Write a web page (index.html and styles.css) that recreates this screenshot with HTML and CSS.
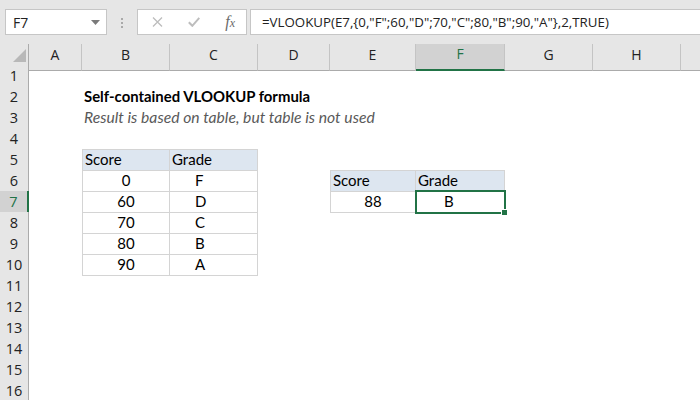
FILE: index.html
```html
<!DOCTYPE html>
<html lang="en">
<head>
    <meta charset="UTF-8">
    <title>Self-contained VLOOKUP formula</title>
    <link rel="stylesheet" href="styles.css">
</head>
<body>
    <div class="toolbar">
        <div class="namebox">
            <span>F7</span>
            <svg class="caret" width="9" height="5" viewBox="0 0 9 5"><polygon points="0,0 9,0 4.5,5" fill="#7a7a7a"/></svg>
        </div>
        <div class="grip"><i></i><i></i><i></i></div>
        <div class="fx-buttons">
            <svg width="11" height="10" viewBox="0 0 11 10"><path d="M1 0.5 L10 9.5 M10 0.5 L1 9.5" stroke="#bdbdbd" stroke-width="1.3" fill="none"/></svg>
            <svg width="12" height="10" viewBox="0 0 12 10"><path d="M0.8 5.2 L4.3 8.8 L11.3 0.8" stroke="#bdbdbd" stroke-width="2" fill="none"/></svg>
            <span class="fx">f<small>x</small></span>
        </div>
        <div class="formula">=VLOOKUP(E7,{0,"F";60,"D";70,"C";80,"B";90,"A"},2,TRUE)</div>
    </div>

    <div class="sheet">
        <div class="row head">
            <div class="corner">
                <svg width="29" height="21" viewBox="0 0 29 21"><polygon points="26,5 26,18 13,18" fill="#b8b8b8"/></svg>
            </div>
            <div class="colhead">A</div>
            <div class="colhead">B</div>
            <div class="colhead">C</div>
            <div class="colhead">D</div>
            <div class="colhead">E</div>
            <div class="colhead active">F</div>
            <div class="colhead">G</div>
            <div class="colhead">H</div>
            <div class="colhead last"></div>
        </div>

        <div class="row"><div class="rowhead">1</div></div>
        <div class="row">
            <div class="rowhead">2</div>
            <div class="cell col-b wide title">Self-contained VLOOKUP formula</div>
        </div>
        <div class="row">
            <div class="rowhead">3</div>
            <div class="cell col-b wide subtitle">Result is based on table, but table is not used</div>
        </div>
        <div class="row"><div class="rowhead">4</div></div>
        <div class="row">
            <div class="rowhead">5</div>
            <div class="cell col-b tbl hdr top left">Score</div>
            <div class="cell col-c tbl hdr top">Grade</div>
        </div>
        <div class="row">
            <div class="rowhead">6</div>
            <div class="cell col-b tbl left num">0</div>
            <div class="cell col-c tbl grade">F</div>
            <div class="cell col-e tbl hdr top left">Score</div>
            <div class="cell col-f tbl hdr top">Grade</div>
        </div>
        <div class="row">
            <div class="rowhead active">7</div>
            <div class="cell col-b tbl left num">60</div>
            <div class="cell col-c tbl grade">D</div>
            <div class="cell col-e tbl left num">88</div>
            <div class="cell col-f tbl grade result selected">B</div>
        </div>
        <div class="row">
            <div class="rowhead">8</div>
            <div class="cell col-b tbl left num">70</div>
            <div class="cell col-c tbl grade">C</div>
        </div>
        <div class="row">
            <div class="rowhead">9</div>
            <div class="cell col-b tbl left num">80</div>
            <div class="cell col-c tbl grade">B</div>
        </div>
        <div class="row">
            <div class="rowhead">10</div>
            <div class="cell col-b tbl left num">90</div>
            <div class="cell col-c tbl grade">A</div>
        </div>
        <div class="row"><div class="rowhead">11</div></div>
        <div class="row"><div class="rowhead">12</div></div>
        <div class="row"><div class="rowhead">13</div></div>
        <div class="row"><div class="rowhead">14</div></div>
        <div class="row"><div class="rowhead">15</div></div>
        <div class="row"><div class="rowhead">16</div></div>
    </div>
</body>
</html>
```

FILE: styles.css
```css
/* Reset default browser styles */
body, html {
    margin: 0;
    padding: 0;
    background: #fff;
    font-family: "Lato", "Liberation Sans", sans-serif;
    width: 700px;
    height: 400px;
    overflow: hidden;
}

/* Formula bar */
.toolbar {
    height: 44px;
    background: #e6e6e6;
    display: flex;
    align-items: flex-start;
    padding-top: 9px;
    box-sizing: border-box;
    font-family: "Open Sans", "Noto Sans", sans-serif;
    font-size: 14px;
    color: #222;
}

.namebox {
    margin-left: 5px;
    width: 102px;
    height: 26px;
    box-sizing: border-box;
    background: #fff;
    border: 1px solid #c6c6c6;
    display: flex;
    align-items: center;
    justify-content: space-between;
    padding: 0 6px 0 7px;
}

.grip {
    width: 30px;
    display: flex;
    flex-direction: column;
    align-items: center;
    gap: 2px;
    padding-top: 9px;
}

.grip i {
    width: 2px;
    height: 2px;
    background: #a9a9a9;
}

.fx-buttons {
    width: 110px;
    height: 26px;
    box-sizing: border-box;
    background: #fff;
    border: 1px solid #c6c6c6;
    display: flex;
    align-items: center;
    justify-content: space-between;
    padding: 0 11px 0 14px;
}

.fx {
    font-family: "Liberation Serif", serif;
    font-style: italic;
    font-size: 16px;
    color: #6a6a6a;
    line-height: 1;
}

.fx small {
    font-size: 12px;
}

.formula {
    margin-left: 3px;
    flex: 1;
    height: 26px;
    box-sizing: border-box;
    background: #fff;
    border: 1px solid #c6c6c6;
    border-right: none;
    padding-left: 11px;
    font-size: 13.3px;
    line-height: 24px;
    white-space: nowrap;
}

/* Worksheet grid */
.row {
    display: grid;
    grid-template-columns: 29px 53px 88px 88px 72px 86px 89px 88px 88px 1fr;
    height: 21px;
}

.corner, .colhead {
    background: #e6e6e6;
    border-right: 1px solid #c4c4c4;
    border-bottom: 1px solid #ababab;
    box-sizing: border-box;
    font-family: "Open Sans", "Noto Sans", sans-serif;
    font-size: 14px;
    line-height: 21px;
    text-align: center;
    color: #222;
}

.corner {
    border-right-color: #ababab;
}

.colhead.last {
    border-right: none;
}

.colhead.active {
    background: #d2d2d2;
    border-bottom: 2px solid #217346;
    color: #217346;
    line-height: 20px;
}

.rowhead {
    grid-column: 1;
    background: #e6e6e6;
    border-right: 1px solid #ababab;
    border-bottom: 1px solid #c4c4c4;
    box-sizing: border-box;
    font-family: "Open Sans", "Noto Sans", sans-serif;
    font-size: 14.5px;
    line-height: 21px;
    text-align: center;
    color: #222;
}

.rowhead.active {
    background: #d2d2d2;
    border-right: 2px solid #217346;
    color: #217346;
}

.cell {
    box-sizing: border-box;
    font-size: 15px;
    line-height: 21px;
    padding: 0 2px;
    color: #000;
    white-space: nowrap;
}

.col-b { grid-column: 3; }
.col-c { grid-column: 4; }
.col-e { grid-column: 6; }
.col-f { grid-column: 7; }

.wide {
    grid-column: 3 / -1;
}

.title {
    font-weight: bold;
    font-size: 14.9px;
}

.subtitle {
    font-style: italic;
    font-size: 15.7px;
    color: #595959;
}

/* Table cells */
.tbl {
    border-right: 1px solid #d4d4d4;
    border-bottom: 1px solid #d4d4d4;
    line-height: 20px;
}

.tbl.top {
    border-top: 1px solid #d4d4d4;
    line-height: 19px;
}

.tbl.left {
    border-left: 1px solid #d4d4d4;
}

.hdr {
    background: #dde6f0;
}

.num {
    text-align: center;
}

.grade {
    padding-left: 25px;
}

.result {
    padding-left: 28px;
}

.selected {
    position: relative;
}

.selected::after {
    content: "";
    position: absolute;
    left: -1px;
    top: -1px;
    right: -2px;
    bottom: -2px;
    border: 2px solid #217346;
}

.selected::before {
    content: "";
    position: absolute;
    right: -4px;
    bottom: -4px;
    width: 5px;
    height: 5px;
    background: #217346;
    border: 1px solid #fff;
    z-index: 1;
}
```
